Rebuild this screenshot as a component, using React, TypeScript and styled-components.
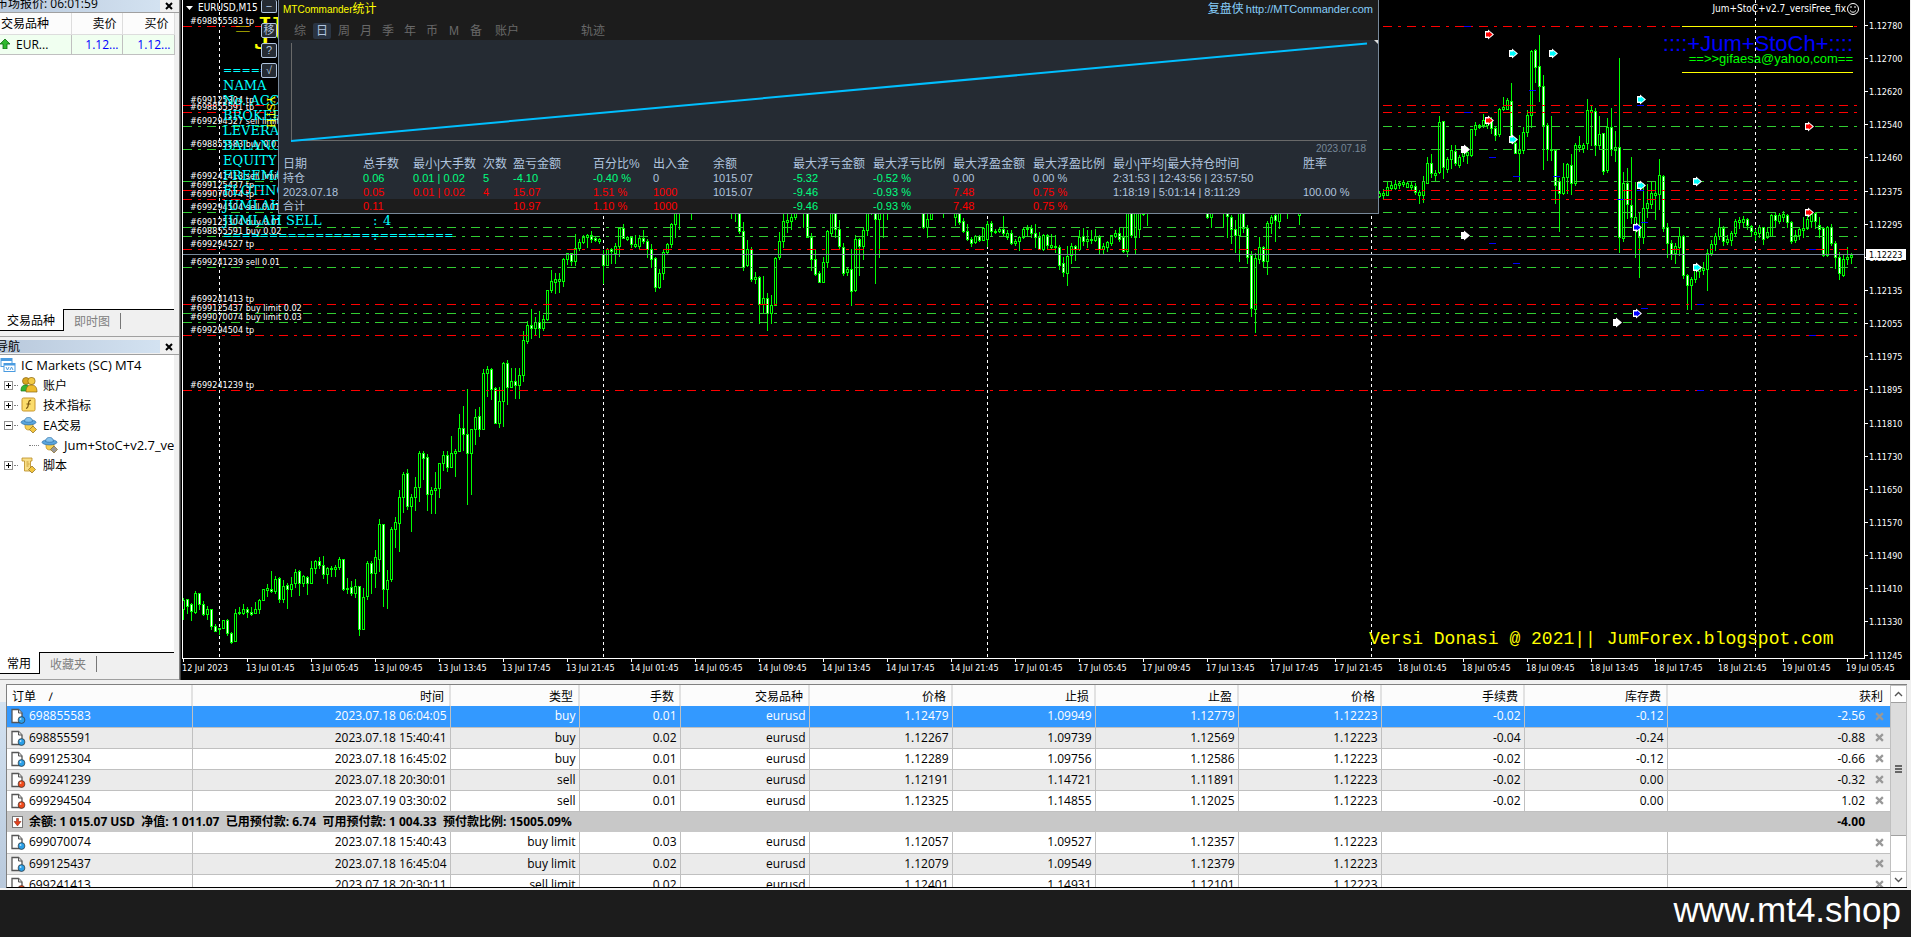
import { FC, ReactNode } from 'react'
import styled, { createGlobalStyle, css } from 'styled-components'

const UiFont = `'Open Sans', 'Noto Sans CJK SC', sans-serif`
const ChartFont = `'DejaVu Sans Condensed', 'Noto Sans', 'Noto Sans CJK SC', sans-serif`
const PanelFont = `'Liberation Sans', 'Noto Sans CJK SC', sans-serif`

const Color = {
  Face: '#f0f0f0',
  Line: '#a0a0a0',
  Cell: '#c0c0c0',
  Green: '#00ff00',
  OrderGreen: '#32cd32',
  Red: '#ff0000',
  Slate: '#778899',
  Steel: '#b0c4de',
  Up: '#00ff7f',
  Down: '#ff0000',
}

/* ---------- chart data ---------- */

// index of the first bar, then "high top bottom low" per bar, w = falling bar
const barRuns: [number, string][] = [
  [
    0,
    `598 600 609 619,599 599 606 613w,603 604 611 620w,591 593 612 613,593 593 604 609w,601 604 614 615w,
    606 609 614 619,609 609 626 629w,624 626 631 631w,628 628 629 634w,620 620 628 628,619 620 633 635w,
    632 633 642 643w,609 613 641 641,607 612 613 614,604 609 613 614,607 609 612 617w,607 612 614 615w,
    602 609 613 613,599 600 609 613,589 589 600 600,584 588 590 596,571 589 591 592w,576 579 591 593,
    577 578 599 602w,580 586 599 602,583 585 589 608w,577 584 589 596,569 572 583 587,570 571 583 595w,
    575 576 583 586,576 577 583 594w,561 568 583 583,560 561 568 573,557 561 565 568w,556 565 574 578w,
    567 568 574 583,566 568 569 576,565 567 569 576,557 559 567 569,559 559 589 590w,578 588 589 593,
    581 587 593 595w,579 586 593 597,586 586 629 635w,588 597 629 629,561 563 596 599,561 563 573 593w,
    550 557 573 587,519 524 559 571,524 524 589 606w,570 580 589 608,527 529 579 581,517 522 529 547,
    490 497 523 551,472 474 497 512,469 473 506 509w,494 497 506 531,477 487 497 510,451 453 487 501,
    451 453 458 479w,454 457 494 510w,487 490 494 513,472 488 490 513,463 463 488 497,451 455 463 470,
    451 455 467 471w,436 453 467 467,449 451 453 476,414 428 451 451,406 428 434 450w,389 434 453 504w,
    429 429 453 494,409 417 429 444,407 416 429 436w,369 373 429 429,366 369 373 396,368 369 389 399w,
    387 388 423 423w,387 401 423 427,362 363 401 426,360 363 387 404w,368 381 387 387,368 381 385 398w,
    368 375 385 398,331 340 375 381,321 325 341 343,309 325 328 338w,317 322 328 335,311 322 328 337w,
    315 319 328 330,290 290 319 320,270 281 290 292,273 279 282 293,273 279 281 292,258 259 281 286,
    253 253 259 264,253 253 261 265w,234 248 261 265,239 242 248 250,235 237 242 243,234 235 237 247,
    231 235 239 242w,236 238 240 241w,238 239 241 243,250 254 265 283w,248 249 265 265,248 249 251 263w,
    243 246 253 263,227 228 246 256,224 228 238 238w,236 237 239 240,236 237 244 247w,235 244 246 247,
    235 238 246 249,230 238 241 243w,239 241 249 257w,244 249 259 267w,257 258 287 291w,269 273 287 288,
    249 252 273 279,243 244 252 254,223 224 244 247,206 213 224 237,200 205 210 229`,
  ],
  [127, `200 203 208 219`],
  [
    137,
    `200 203 208 218,200 203 208 221,200 207 231 233w,222 231 267 270w,240 249 265 266,247 249 279 281w,
    272 277 279 283,276 277 304 323w,276 298 304 312,293 298 313 330w,295 305 313 323,257 258 305 305,
    232 241 257 259,210 221 241 247,205 220 222 232,213 217 221 229,208 213 217 219`,
  ],
  [
    155,
    `200 203 210 227,200 207 237 237w,233 237 259 270w,250 259 274 275w,271 273 282 282w,257 262 282 282,
    230 231 262 267,205 207 233 235,203 207 229 237w,220 229 246 248w,243 247 273 275w,267 269 272 275,
    249 269 291 305w,235 239 290 291,238 239 246 275w,227 230 246 259,200 210 230 235,200 205 212 214,
    200 207 219 283w,200 207 219 257,200 204 208 237,200 204 208 219`,
  ],
  [185, `200 207 227 228w,214 219 227 237,203 207 219 219`],
  [190, `200 204 208 217`],
  [
    193,
    `200 207 217 225,205 210 222 224w,218 221 231 232w,224 231 239 240w,237 239 243 246w,235 236 242 243,
    235 236 240 241w,227 228 240 240,221 224 239 246,221 223 231 236w,229 231 232 233,227 229 231 232,
    216 229 233 236w,230 233 237 239,230 233 243 244w,239 241 243 245,236 237 241 250,227 229 237 238,
    225 228 229 235,225 228 233 237w,224 233 237 247w,232 237 249 249w,234 235 249 250,234 235 245 249w,
    234 245 247 249,235 246 247 252,245 247 265 269w,257 263 272 276w,246 256 273 285,243 246 255 263,
    245 246 249 260w,230 237 249 250,228 236 241 245w,230 239 241 247,230 239 240 243,229 236 240 241,
    235 237 249 254w,243 246 249 254,241 242 247 251,235 235 243 245,230 233 236 237,227 233 239 241w,
    227 237 251 252w,200 207 251 256,200 207 235 237w,203 207 237 254,200 207 229 237,205 208 214 215,
    200 205 208 225`,
  ],
  [256, `203 207 217 218w,203 207 217 227`],
  [
    260,
    `200 204 208 227,203 207 216 237w,215 217 229 243w,220 229 235 252w,203 207 235 261,203 207 228 232w,
    225 228 257 263w,251 255 308 316w,253 258 309 332,237 247 259 263,246 247 261 267w,221 223 261 274,
    215 217 223 233,203 215 220 241w,203 207 221 228`,
  ],
  [276, `200 204 208 218`],
  [279, `203 210 215 224`],
  [
    299,
    `191 193 196 197,189 193 195 198,182 187 195 195,182 185 188 189,180 184 188 189,182 183 185 188,
    180 182 184 186,181 183 187 187,182 185 187 190,183 186 192 194w,190 192 195 203,176 181 195 202,
    157 163 183 183,154 163 173 177w,170 173 175 180,116 122 172 173,121 121 167 178w,157 159 169 172,
    145 150 159 168,145 151 163 165w,155 157 165 167,147 151 156 161,147 152 155 163,129 129 155 156,
    122 125 129 135,124 125 127 128,114 120 125 127,117 120 125 128,117 120 128 133w,127 128 135 140w,
    108 109 134 136,97 107 109 110,98 100 109 109,83 101 140 143w,139 143 153 153w,135 150 153 181,
    127 132 150 153,110 115 132 136,50 51 115 127,49 50 67 82w,35 66 86 101w,75 86 125 169w,
    123 125 149 160w,116 149 150 160,149 150 185 203w,178 181 193 231w,163 177 193 194,163 164 177 193,
    154 165 183 194w,143 145 183 185,136 145 147 151,143 145 148 152,99 110 143 149,105 110 112 145,
    108 111 145 155w,116 134 145 149,133 133 171 174w,118 127 170 172,108 127 149 155w,131 147 150 161,
    58 147 237 252w,172 183 238 241,168 183 204 218w,157 205 217 223w,182 217 227 257,212 227 237 277w,
    183 208 237 243,184 203 208 217,182 193 204 208,181 193 195 219,159 175 194 209,175 176 228 231w,
    223 227 243 257w,240 243 254 259w,243 246 253 263,228 236 247 255,235 236 275 278w,274 275 285 309w,
    277 279 285 309,264 269 279 282,266 268 271 277,262 268 270 274,249 253 269 290,240 244 253 255,
    233 236 244 250,218 227 236 239,226 228 241 245w,235 239 242 244,231 233 240 245,219 221 233 235,
    217 220 222 228,216 219 222 226,218 219 225 229w,225 226 231 235w,229 232 234 240,225 227 233 237,
    227 227 239 244w,228 232 237 238,214 215 236 236,212 215 220 226w,213 215 221 223,211 214 217 221,
    214 215 222 227w,221 222 241 243w,230 235 240 242,227 229 235 239,217 228 230 237,215 219 228 229,
    211 214 221 227,212 213 221 228w,217 225 229 237w,227 228 255 256w,226 227 255 256,224 227 243 245w,
    241 243 257 268w,252 257 273 279w,255 259 275 276,247 257 259 264,253 255 257 263`,
  ],
]

const bars = barRuns.flatMap(([start, text]) =>
  text.split(',').map((item, i) => {
    const raw = item.trim()
    const [high, top, bottom, low] = raw.replace('w', '').split(' ').map(Number)
    return { x: 183 + (start + i) * 4, high, top, bottom, low, falling: raw.endsWith('w') }
  }),
)

const orderLines: { y: number; tp?: boolean; label?: string }[] = [
  { y: 26, tp: true, label: '#698855583 tp' },
  { y: 105, tp: true, label: '#699125304 tp' },
  { y: 112, tp: true, label: '#698855591 tp' },
  { y: 126, label: '#699294527 sell limit 0.02' },
  { y: 149, label: '#698855583 buy 0.01' },
  { y: 181, label: '#699241413 sell limit 0.02' },
  { y: 190, tp: true, label: '#699125437 tp' },
  { y: 199, tp: true, label: '#699070074 tp' },
  { y: 212, label: '#699294504 sell 0.01' },
  { y: 227, label: '#699125304 buy 0.01' },
  { y: 236, label: '#698855591 buy 0.02' },
  { y: 249, tp: true, label: '#699294527 tp' },
  { y: 267, label: '#699241239 sell 0.01' },
  { y: 304, tp: true, label: '#699241413 tp' },
  { y: 313, label: '#699125437 buy limit 0.02' },
  { y: 322, label: '#699070074 buy limit 0.03' },
  { y: 335, tp: true, label: '#699294504 tp' },
  { y: 390, tp: true, label: '#699241239 tp' },
]

const prices: [string, number][] = [
  ['1.12780', 25],
  ['1.12700', 58],
  ['1.12620', 91],
  ['1.12540', 124],
  ['1.12460', 157],
  ['1.12375', 191],
  ['1.12295', 224],
  ['1.12215', 257],
  ['1.12135', 290],
  ['1.12055', 323],
  ['1.11975', 356],
  ['1.11895', 389],
  ['1.11810', 423],
  ['1.11730', 456],
  ['1.11650', 489],
  ['1.11570', 522],
  ['1.11490', 555],
  ['1.11410', 588],
  ['1.11330', 621],
  ['1.11245', 655],
]

const hours = ['01:45', '05:45', '09:45', '13:45', '17:45', '21:45']
const times = [
  '12 Jul 2023',
  ...['13', '14', '17', '18', '19']
    .flatMap((day) => hours.map((hour) => `${day} Jul ${hour}`))
    .slice(0, 26),
]

const arrows: [number, number, string][] = [
  [1489, 34, '#ff0000'],
  [1513, 53, '#00ffff'],
  [1553, 53, '#00ffff'],
  [1489, 120, '#ff0000'],
  [1513, 139, '#00ffff'],
  [1465, 149, '#ffffff'],
  [1641, 99, '#00ffff'],
  [1809, 126, '#ff0000'],
  [1641, 185, '#00ffff'],
  [1697, 181, '#00ffff'],
  [1809, 212, '#ff0000'],
  [1637, 227, '#0000ff'],
  [1465, 235, '#ffffff'],
  [1697, 267, '#00ffff'],
  [1637, 313, '#0000ff'],
  [1617, 322, '#ffffff'],
]

const stops = [
  [1467, 26],
  [1467, 112],
  [1532, 90],
  [1640, 105],
  [1492, 157],
  [1516, 176],
  [1556, 176],
  [1640, 190],
  [1620, 199],
  [1644, 222],
  [1492, 243],
  [1516, 263],
  [1812, 249],
  [1700, 304],
  [1644, 308],
  [1812, 335],
  [1700, 390],
]

const infoRows = [
  'NAMA',
  'No. ACC',
  'BROKER',
  'LEVERAGE',
  'BALANCE',
  'EQUITY',
  'FREEMARGIN',
  'FLOTING',
  'JUMLAH BUY',
  'JUMLAH SELL',
]

/* ---------- table data ---------- */

const statHeads: [string, number?][] = [
  ['日期', 80],
  ['总手数', 50],
  ['最小|大手数', 70],
  ['次数', 30],
  ['盈亏金额', 80],
  ['百分比%', 60],
  ['出入金', 60],
  ['余额', 80],
  ['最大浮亏金额', 80],
  ['最大浮亏比例', 80],
  ['最大浮盈金额', 80],
  ['最大浮盈比例', 80],
  ['最小|平均|最大持仓时间', 190],
  ['胜率'],
]

type Tone = 'up' | 'down' | 'plain'
const toneKeys: Record<string, Tone> = { u: 'up', d: 'down', p: 'plain' }

const statRows = [
  {
    cells: ['持仓', '0.06', '0.01 | 0.02', '5', '-4.10', '-0.40 %', '0', '1015.07', '-5.32', '-0.52 %', '0.00', '0.00 %', '2:31:53 | 12:43:56 | 23:57:50', ''],
    tones: 'puuuuuppuupppp',
  },
  {
    cells: ['2023.07.18', '0.05', '0.01 | 0.02', '4', '15.07', '1.51 %', '1000', '1015.07', '-9.46', '-0.93 %', '7.48', '0.75 %', '1:18:19 | 5:01:14 | 8:11:29', '100.00 %'],
    tones: 'pddddddpuuddpp',
  },
  {
    cells: ['合计', '0.11', '', '', '10.97', '1.10 %', '1000', '', '-9.46', '-0.93 %', '7.48', '0.75 %', '', ''],
    tones: 'pddddddpuuddpp',
  },
]

const orderHeads: [string, number?][] = [
  ['订单', 185],
  ['时间', 258],
  ['类型', 129],
  ['手数', 101],
  ['交易品种', 129],
  ['价格', 143],
  ['止损', 143],
  ['止盈', 143],
  ['价格', 143],
  ['手续费', 143],
  ['库存费', 143],
  ['获利'],
]

const openOrders = [
  ['698855583', '2023.07.18 06:04:05', 'buy', '0.01', 'eurusd', '1.12479', '1.09949', '1.12779', '1.12223', '-0.02', '-0.12', '-2.56'],
  ['698855591', '2023.07.18 15:40:41', 'buy', '0.02', 'eurusd', '1.12267', '1.09739', '1.12569', '1.12223', '-0.04', '-0.24', '-0.88'],
  ['699125304', '2023.07.18 16:45:02', 'buy', '0.01', 'eurusd', '1.12289', '1.09756', '1.12586', '1.12223', '-0.02', '-0.12', '-0.66'],
  ['699241239', '2023.07.18 20:30:01', 'sell', '0.01', 'eurusd', '1.12191', '1.14721', '1.11891', '1.12223', '-0.02', '0.00', '-0.32'],
  ['699294504', '2023.07.19 03:30:02', 'sell', '0.01', 'eurusd', '1.12325', '1.14855', '1.12025', '1.12223', '-0.02', '0.00', '1.02'],
]

const pendingOrders = [
  ['699070074', '2023.07.18 15:40:43', 'buy limit', '0.03', 'eurusd', '1.12057', '1.09527', '1.12357', '1.12223', '', '', ''],
  ['699125437', '2023.07.18 16:45:04', 'buy limit', '0.02', 'eurusd', '1.12079', '1.09549', '1.12379', '1.12223', '', '', ''],
  ['699241413', '2023.07.18 20:30:11', 'sell limit', '0.02', 'eurusd', '1.12401', '1.14931', '1.12101', '1.12223', '', '', ''],
]

/* ---------- icons ---------- */

const UpArrowIcon = () => (
  <svg width="10" height="10" viewBox="0 0 10 10">
    <path d="M5 0L10 5H7V10H3V5H0Z" fill="#2eb82e" stroke="#0a6b0a" strokeWidth="0.8" />
  </svg>
)

const CloseIcon: FC<{ size?: number }> = ({ size = 8 }) => (
  <svg width={size} height={size} viewBox="0 0 8 8">
    <path d="M1 1L7 7M7 1L1 7" stroke="currentColor" strokeWidth="2" />
  </svg>
)

const TerminalIcon = () => (
  <svg width="16" height="16" viewBox="0 0 16 16">
    <rect x="1" y="1.5" width="11" height="8" fill="#fff" stroke="#4a9be0" />
    <path d="M1 3h11" stroke="#4a9be0" strokeWidth="2" />
    <rect x="4" y="6.5" width="11" height="8" fill="#fff" stroke="#4a9be0" />
    <path d="M4 7.5h11" stroke="#4a9be0" strokeWidth="2" />
    <path d="M6 10l1.5 3 1.5-3M10 13l1.5-3 1.5 3" fill="none" stroke="#4a9be0" />
  </svg>
)

const AccountsIcon = () => (
  <svg width="18" height="18" viewBox="0 0 18 18">
    <circle cx="6" cy="5" r="3.5" fill="#d9a520" stroke="#8a6410" strokeWidth="0.7" />
    <path d="M1 15c0-5 2-6 5-6s4 2 4 6z" fill="#35b535" stroke="#157515" strokeWidth="0.7" />
    <rect x="8" y="1.5" width="7" height="7" rx="3" fill="#f3cb45" stroke="#8a6410" strokeWidth="0.7" />
    <path d="M6 16c0-5 2-7 5.5-7s5.5 2 5.5 7z" fill="#eebc2c" stroke="#8a6410" strokeWidth="0.7" />
  </svg>
)

const IndicatorIcon = () => (
  <svg width="18" height="18" viewBox="0 0 18 18">
    <rect x="2" y="2" width="13" height="13" rx="1.5" fill="#fbdc6c" stroke="#c9962a" />
    <path d="M11 4.5c-2-.5-2.300 1-2.600 3.500S8 12.500 6 12.300M6.500 8h4" fill="none" stroke="#7a5510" strokeWidth="1.2" />
  </svg>
)

const ExpertIcon: FC<{ tag: string }> = ({ tag }) => (
  <svg width="18" height="18" viewBox="0 0 18 18">
    <path d="M5 6h8v4c0 3-1.500 4-4 4s-4-1-4-4z" fill="#f6cf55" stroke="#b98a1e" strokeWidth="0.7" />
    <ellipse cx="8.5" cy="6.3" rx="7.5" ry="2.6" fill="#5aa5dd" stroke="#2c6ea8" strokeWidth="0.7" />
    <path d="M4.500 5.500C5 2 6.500 1.500 8.500 1.500s3.500.5 4 4c-2 1-6 1-8 0z" fill="#86c3ee" stroke="#2c6ea8" strokeWidth="0.7" />
    <path d="M13 10l3.500 3.500L13 17l-3.500-3.500z" fill={tag} stroke="#8a6a20" strokeWidth="0.7" />
  </svg>
)

const ScriptIcon = () => (
  <svg width="18" height="18" viewBox="0 0 18 18">
    <path d="M2 2h10v3h-1.500v7H13v3H4.500V5H2z" fill="#f8de87" stroke="#b98a1e" strokeWidth="0.8" />
    <path d="M6.500 6h2M6.500 8h3M6.500 10h2" stroke="#b98a1e" strokeWidth="0.8" />
    <path d="M12 10l3.500 3.500L12 17l-3.500-3.500z" fill="#f3c53d" stroke="#8a6a20" strokeWidth="0.7" />
  </svg>
)

const OrderIcon: FC<{ color: string }> = ({ color }) => (
  <svg width="16" height="16" viewBox="0 0 16 16">
    <path d="M2 1.500h6.500l3.500 3.500v9.500h-10z" fill="#fff" stroke="#555" strokeWidth="1.3" />
    <path d="M8.500 1.500v3.500h3.500" fill="#ddd" stroke="#555" />
    <circle cx="11.5" cy="12" r="3.4" fill={color} stroke="#333" strokeWidth="0.7" />
    <circle cx="10.6" cy="11" r="0.9" fill="#fff" opacity="0.7" />
  </svg>
)

const BalanceIcon = () => (
  <svg width="16" height="16" viewBox="0 0 16 16">
    <rect x="2.5" y="2.5" width="10" height="11" fill="#fff" stroke="#777" />
    <path d="M6.500 4.500h2v3h2.500L7.500 12 4 7.500h2.500z" fill="#e2401c" stroke="#7a1a08" strokeWidth="0.5" />
  </svg>
)

const ChevronIcon: FC<{ down?: boolean }> = ({ down }) => (
  <svg width="9" height="6" viewBox="0 0 9 6">
    <path d={down ? 'M1 1l3.500 3.500L8 1' : 'M1 5l3.500-3.500L8 5'} fill="none" stroke="#555" strokeWidth="1.4" />
  </svg>
)

/* ---------- parts ---------- */

const GlobalStyle = createGlobalStyle`
  * { box-sizing: border-box; }
  body { margin: 0; background: #1c1c1c; }
  button { margin: 0; padding: 0; border: 0; background: none; font: inherit; color: inherit; }
  table { border-collapse: collapse; border-spacing: 0; table-layout: fixed; }
  th, td { padding: 0; font-weight: inherit; text-align: left; white-space: nowrap; }
  svg { display: block; }
`

const Page = styled.div`
  display: flex;
  flex-direction: column;
  min-height: 100vh;
  overflow: hidden;
  font-family: ${UiFont};
  font-size: 12px;
  color: #000;
  background: #1c1c1c;
`

const Workspace = styled.div`
  display: flex;
  background: ${Color.Face};
`

const Sidebar = styled.aside`
  display: flex;
  flex-direction: column;
  flex: 0 0 179px;
  width: 179px;
  overflow: hidden;
`

const DockPanel = styled.section<{ grow?: boolean }>`
  display: flex;
  flex-direction: column;
  flex: ${(props) => (props.grow ? '1' : '0 0 337px')};
  border-bottom: 1px solid ${Color.Line};
  padding-bottom: 5px;
`

const DockTitle = styled.header<{ clipped?: boolean }>`
  display: flex;
  flex: 0 0 ${(props) => (props.clipped ? 13 : 16)}px;
  align-items: center;
  padding-right: 1px;
  margin-top: ${(props) => (props.clipped ? 0 : 2)}px;
  border-bottom: 1px solid ${Color.Line};
  overflow: hidden;

  h2 {
    flex: 1;
    margin: 0;
    font-size: 12px;
    font-weight: 400;
    line-height: ${(props) => (props.clipped ? 8 : 13)}px;
    height: 13px;
    text-indent: -4px;
    background: linear-gradient(90deg, #b9c9dc, #d3e2f1);
  }

  button {
    width: 18px;
    height: 12px;
    display: grid;
    place-items: center;
  }
`

const White = styled.div`
  flex: 1;
  margin-right: 5px;
  background: #fff;
`

const QuoteTable = styled.table`
  width: 174px;

  th,
  td {
    padding: 0 3px;
    border-right: 1px solid ${Color.Cell};
    border-bottom: 1px solid ${Color.Cell};
    text-align: right;
  }
  th {
    padding: 0 5px;
    height: 21px;
    border-color: #ddd;
    background: #fcfcfc;
  }
  th:first-child {
    text-align: left;
    padding-left: 1px;
  }
  td {
    height: 20px;
    background: #f0fff0;
    color: #0000ff;
  }
  td:first-child {
    color: #000;
  }
`

const Symbol = styled.span`
  display: flex;
  align-items: center;
  gap: 6px;
  margin-left: -3px;
`

const Tabs = styled.nav`
  display: flex;
  flex: 0 0 22px;
  height: 22px;
  margin-right: 5px;
`

const Tab = styled.button<{ active?: boolean }>`
  padding: 0 8px 0 7px;
  ${(props) =>
    props.active
      ? css`
          background: #fff;
          border-right: 1px solid #000;
          border-bottom: 1px solid #000;
        `
      : css`
          padding-left: 10px;
          color: #808080;
          border-top: 1px solid #000;
        `}
`

const TabRest = styled.span`
  flex: 1;
  border-top: 1px solid #000;

  &::before {
    content: '';
    display: block;
    width: 1px;
    height: 16px;
    margin: 3px 0 0 2px;
    background: #777;
  }
`

const Tree = styled.ul`
  margin: 0;
  padding: 0;
  list-style: none;
`

const TreeItem = styled.li<{ depth: number; wide?: boolean }>`
  display: flex;
  align-items: center;
  gap: 5px;
  height: 20px;
  padding-left: ${(props) => [0, 4, 29][props.depth]}px;
  font-size: ${(props) => (props.wide ? 13 : 12)}px;
  white-space: nowrap;
  overflow: hidden;

  svg {
    flex: none;
  }
`

const Expander = styled.button`
  width: 9px;
  height: 9px;
  border: 1px solid #919191;
  background: #fff;
  display: grid;
  place-items: center;
`

const Dots = styled.span<{ wide?: boolean }>`
  flex: none;
  width: ${(props) => (props.wide ? 10 : 4)}px;
  margin-left: ${(props) => (props.wide ? 0 : -4)}px;
  border-top: 1px dotted #808080;
  margin-right: -3px;
`

const ChartWindow = styled.main`
  position: relative;
  flex: 1;
  min-width: 0;
  overflow: hidden;
  background: #000;
  border-left: 1px solid #808080;
  box-shadow: inset 1px 0 #404040;
  margin-right: 1px;

  > svg {
    margin-left: 1px;
  }
`

const ToolButtons = styled.div`
  position: absolute;
  top: 0;
  left: 81px;
  display: flex;
  flex-direction: column;
  gap: 5px;
`

const ToolButton = styled.button<{ clipped?: boolean }>`
  width: 16px;
  height: ${(props) => (props.clipped ? 13 : 15)}px;
  margin-bottom: ${(props) => (props.clipped ? 5 : 0)}px;
  border: 1px solid ${Color.Steel};
  border-top-width: ${(props) => (props.clipped ? 0 : 1)}px;
  border-radius: 2px;
  background: #252b33;
  color: ${Color.Steel};
  font: 11px ${PanelFont};
  line-height: 11px;
`

const StatPanel = styled.section`
  position: absolute;
  top: 0;
  left: 98px;
  width: 1101px;
  border: 1px solid ${Color.Slate};
  border-top: 0;
  background: #252b33;
  color: ${Color.Steel};
  font-family: ${PanelFont};
  font-size: 12px;
`

const StatHead = styled.header`
  display: flex;
  justify-content: space-between;
  height: 20px;
  padding: 0 5px 0 4px;
  background: #1c1c1c;
  line-height: 19px;

  h1 {
    margin: 0;
    font-size: 12px;
    font-weight: 400;
    color: #ffff00;
  }
  h1 span {
    font-size: 10px;
  }
  a {
    display: flex;
    gap: 2px;
    color: #87cefa;
    text-decoration: none;
  }
  a span {
    font-size: 11px;
  }
`

const StatTabs = styled.nav`
  display: flex;
  align-items: flex-end;
  gap: 4px;
  height: 20px;
  padding: 0 12px 1px;
  background: #1c1c1c;
  color: #696969;
`

const StatTab = styled.button<{ active?: boolean; gap?: number }>`
  min-width: 18px;
  height: 16px;
  line-height: 16px;
  margin-left: ${(props) => props.gap || 0}px;
  border-radius: 2px;
  ${(props) => props.active && `background: #2a3442; color: ${Color.Steel};`}
`

const Curve = styled.figure`
  display: flex;
  flex-direction: column;
  height: 117px;
  margin: 0;
  padding-left: 11px;

  figcaption {
    padding-right: 12px;
    font-size: 10px;
    line-height: 13px;
    text-align: right;
    color: ${Color.Slate};
  }
`

const StatTable = styled.table`
  width: 100%;

  th,
  td {
    height: 14px;
    line-height: 14px;
  }
  td {
    font-size: 11px;
  }
  th:first-child,
  td:first-child {
    padding-left: 4px;
  }
  tbody tr:last-child {
    background: #1c1c1c;
  }
`

const StatCell = styled.td<{ tone: Tone }>`
  color: ${(props) =>
    ({ up: Color.Up, down: Color.Down, plain: Color.Steel })[props.tone]};
`

const Terminal = styled.section`
  display: flex;
  height: 210px;
  padding-top: 4px;
  background: ${Color.Face};
  border-bottom: 2px solid #f4f4f4;
`

const TerminalGrip = styled.div`
  flex: 0 0 6px;
  margin-top: 18px;
  background: linear-gradient(#d3e2f1, #b9c9dc);
`

const TerminalBody = styled.div`
  display: flex;
  flex: 1;
  min-width: 0;
  border-top: 1px solid #808080;
  border-left: 1px solid #808080;
  border-bottom: 1px solid #000;
  margin-right: 4px;
  overflow: hidden;
`

const OrderArea = styled.div`
  flex: 1;
  min-width: 0;
  overflow: hidden;
`

const OrderTable = styled.table`
  width: 100%;

  th {
    height: 21px;
    padding: 0 5px;
    text-align: right;
    white-space: pre;
    background: #fcfcfc;
    border-right: 2px solid #e2e2e2;
  }
  th:first-child {
    text-align: left;
  }
  th:last-child {
    border-right: 0;
    padding-right: 7px;
  }
`

const OrderRow = styled.tr<{ selected?: boolean; odd?: boolean }>`
  background: ${(props) => (props.selected ? '#3399ff' : props.odd ? '#ebebeb' : '#fff')};
  color: ${(props) => (props.selected ? '#fff' : '#000')};

  td {
    height: 21px;
    line-height: 20px;
    padding: 0 3px;
    text-align: right;
    border-right: 1px solid ${Color.Cell};
    border-bottom: 1px solid ${Color.Cell};
  }
  td:last-child {
    border-right: 0;
    padding-right: 6px;
  }
`

const SummaryRow = styled.tr`
  background: #c8c8c8;
  font-weight: 700;

  td {
    height: 21px;
    line-height: 20px;
    padding: 0 3px;
  }
  td:last-child {
    text-align: right;
    padding-right: 25px;
  }
`

const WithIcon = styled.span`
  display: flex;
  align-items: center;
  gap: 3px;
  white-space: pre;
`

const Profit = styled.span`
  display: flex;
  justify-content: flex-end;
  align-items: center;
  gap: 9px;

  button {
    width: 10px;
    display: grid;
    place-items: center;
    color: #999;
  }
`

const ScrollBar = styled.div`
  display: flex;
  flex-direction: column;
  flex: 0 0 17px;
  background: #fff;
  border: 1px solid ${Color.Cell};
  border-width: 1px 1px 0;

  button {
    height: 16px;
    display: grid;
    place-items: center;
  }
  button:last-child {
    margin-top: auto;
    border-top: 1px solid ${Color.Cell};
  }
`

const Thumb = styled.div`
  height: 134px;
  display: grid;
  align-content: center;
  justify-content: center;
  gap: 1px;
  background: #dcdcdc;
  border: 1px solid ${Color.Line};
  border-width: 1px 0;

  i {
    width: 7px;
    height: 2px;
    background: #666;
  }
`

const Footer = styled.footer`
  flex: 1;
  padding: 0 10px 0 0;
  text-align: right;
  font: 35px/40px ${PanelFont};
  color: #fff;
`

/* ---------- views ---------- */

const DockTabs: FC<{ items: string[] }> = ({ items }) => (
  <Tabs>
    {items.map((item, i) => (
      <Tab key={item} active={i === 0}>
        {item}
      </Tab>
    ))}
    <TabRest />
  </Tabs>
)

const TreeNode: FC<{ icon: ReactNode; open?: boolean; children: ReactNode }> = ({
  icon,
  open,
  children,
}) => (
  <TreeItem depth={1}>
    <Expander aria-label="expand">
      <svg width="5" height="5" viewBox="0 0 5 5" shapeRendering="crispEdges">
        <path d={open ? 'M0 2h5v1H0z' : 'M0 2h5v1H0zM2 0h1v5H2z'} />
      </svg>
    </Expander>
    <Dots />
    {icon}
    {children}
  </TreeItem>
)

const Chart = () => (
  <svg width="1729" height="680" viewBox="181 0 1729 680" fontFamily={ChartFont} fontSize="9">
    <rect x="181" y="0" width="1729" height="680" fill="#000" />
    <g shapeRendering="crispEdges">
      {[219, 603, 987, 1371, 1755].map((x) => (
        <path key={x} d={`M${x + 0.5} 0V658`} stroke="#fff" strokeDasharray="3 3" />
      ))}
      {bars.map((bar) => (
        <g key={bar.x}>
          <rect x={bar.x} y={bar.high} width="1" height={bar.low - bar.high + 1} fill={Color.Green} />
          <rect x={bar.x - 1} y={bar.top} width="3" height={bar.bottom - bar.top + 1} fill={Color.Green} />
          {bar.bottom - bar.top > 1 && (
            <rect
              x={bar.x}
              y={bar.top + 1}
              width="1"
              height={bar.bottom - bar.top - 1}
              fill={bar.falling ? '#fff' : '#000'}
            />
          )}
        </g>
      ))}
      {orderLines.map((line) => (
        <path
          key={line.y}
          d={`M183 ${line.y + 0.5}H1858`}
          stroke={line.tp ? Color.Red : Color.OrderGreen}
          strokeDasharray="9 6 3 6"
        />
      ))}
      <path d="M183 254.5H1864" stroke={Color.Slate} />
      {stops.map(([x, y]) => (
        <path key={`${x}-${y}`} d={`M${x - 3} ${y + 0.5}h7`} stroke="#0000ff" />
      ))}
      <path d="M182.5 0V658.5M182 658.5H1865M1864.5 0V659" stroke="#fff" fill="none" />
      {times.map((time, i) => (
        <path key={time} d={`M${183.5 + i * 64} 659v3`} stroke="#fff" />
      ))}
      {prices.map(([price, y]) => (
        <path key={price} d={`M1865 ${y + 0.5}h3`} stroke="#fff" />
      ))}
    </g>
    {arrows.map(([x, y, color]) => (
      <g key={`${x}-${y}`} transform={`translate(${x} ${y})`}>
        <path d="M-4-3H-1V-4.500L5 .5-1 5.500V4H-4Z" fill="#fff" />
        <path d="M-3-1.500H0V-2.500L3.500 .5 0 3.500V2.500H-3Z" fill={color} />
      </g>
    ))}
    <g fill="#fff">
      {orderLines.map((line) => (
        <text key={line.y} x="190" y={line.y - 2}>
          {line.label}
        </text>
      ))}
      {times.map((time, i) => (
        <text key={time} x={182 + i * 64} y="671">
          {time}
        </text>
      ))}
      {prices.map(([price, y]) => (
        <text key={price} x="1869" y={y + 4}>
          {price}
        </text>
      ))}
      <path d="M186 6h7l-3.500 4z" />
      <text x="198" y="11" fontSize="10">
        EURUSD,M15
      </text>
      <text x="1846" y="12" fontSize="10" textAnchor="end">
        Jum+StoC+v2.7_versiFree_fix
      </text>
    </g>
    <g fill="none" stroke="#fff">
      <circle cx="1853" cy="9" r="5.5" />
      <path d="M1850 10.500q3 3.500 6 0M1851 6v2M1855 6v2" />
    </g>
    <rect x="1866" y="249" width="40" height="11" fill="#fff" />
    <text x="1869" y="258" fill="#000">
      1.12223
    </text>

    <g fontFamily="'DejaVu Serif', serif" fontSize="13" fill="#00ffff">
      <text x="223" y="74" fontSize="11">
        =====
      </text>
      {infoRows.map((row, i) => (
        <text key={row} x="223" y={90 + i * 15}>
          {row}
        </text>
      ))}
      <text x="373" y="225">
        :
      </text>
      <text x="383" y="225">
        4
      </text>
      <text x="223" y="239" fontSize="11">
        =========================
      </text>
      <text x="373" y="240">
        :
      </text>
    </g>
    <g fill="#ffff00">
      <text x="233" y="41" fontFamily="Lato, sans-serif" fontWeight="100" fontSize="34">
        =
      </text>
      <text x="258" y="42" fontFamily="'DejaVu Serif', serif" fontSize="34">
        JU
      </text>
      <text fontFamily="'DejaVu Serif', serif" fontSize="11" transform="translate(267 96) rotate(90)">
        YSTH
      </text>
      <path d="M1682 26.5H1853M1682 72.5H1853" stroke="#ffff00" shapeRendering="crispEdges" />
      <text x="1369" y="644" fontFamily="'Liberation Mono', monospace" fontSize="18">
        Versi Donasi @ 2021|| JumForex.blogspot.com
      </text>
    </g>
    <g fontFamily="'Liberation Sans', sans-serif" textAnchor="end">
      <text x="1853" y="51" fontSize="22" fill="#0000ff">
        ::::+Jum+StoCh+::::
      </text>
      <text x="1853" y="63" fontSize="13" fill="#00ff00">
        {'==>>gifaesa@yahoo,com=='}
      </text>
    </g>
  </svg>
)

const Statistics = () => (
  <StatPanel>
    <StatHead>
      <h1>
        <span>MTCommander</span>统计
      </h1>
      <a href="#site">
        复盘侠<span>http://MTCommander.com</span>
      </a>
    </StatHead>
    <StatTabs>
      {['综', '日', '周', '月', '季', '年', '币', 'M', '备', '账户', '轨迹'].map((name) => (
        <StatTab key={name} active={name === '日'} gap={{ 账户: 6, 轨迹: 58 }[name]}>
          {name}
        </StatTab>
      ))}
    </StatTabs>
    <Curve>
      <svg width="1088" height="102" viewBox="290 40 1088 102">
        <path d="M291.5 43V140.5H1367" fill="none" stroke="#696969" shapeRendering="crispEdges" />
        <path d="M291 141L1367 43.5" stroke="#00bfff" strokeWidth="2" />
        <path d="M1378 36v8l-4-4z" fill="#ddd" />
      </svg>
      <figcaption>2023.07.18</figcaption>
    </Curve>
    <StatTable>
      <colgroup>
        {statHeads.map(([name, width], i) => (
          <col key={name} width={i === 0 ? 84 : width} />
        ))}
      </colgroup>
      <thead>
        <tr>
          {statHeads.map(([name]) => (
            <th key={name}>{name}</th>
          ))}
        </tr>
      </thead>
      <tbody>
        {statRows.map((row) => (
          <tr key={row.cells[0]}>
            {row.cells.map((cell, i) => (
              <StatCell key={i} tone={toneKeys[row.tones[i]]}>
                {cell}
              </StatCell>
            ))}
          </tr>
        ))}
      </tbody>
    </StatTable>
  </StatPanel>
)

const Order: FC<{ cells: string[]; selected?: boolean; odd?: boolean }> = ({
  cells,
  selected,
  odd,
}) => {
  const [ticket, ...rest] = cells
  const profit = rest.pop()
  const pending = profit === ''
  return (
    <OrderRow selected={selected} odd={odd}>
      <td>
        <WithIcon>
          <OrderIcon color={cells[2].startsWith('buy') ? '#2a9fe8' : '#f04a1a'} />
          {ticket}
        </WithIcon>
      </td>
      {(pending ? rest.slice(0, 8) : rest).map((cell, i) => (
        <td key={i}>{cell}</td>
      ))}
      {pending && <td colSpan={2} />}
      <td>
        <Profit>
          {profit}
          <button aria-label="close order">
            <CloseIcon size={9} />
          </button>
        </Profit>
      </td>
    </OrderRow>
  )
}

const App = () => (
  <Page>
    <GlobalStyle />
    <Workspace>
      <Sidebar>
        <DockPanel>
          <DockTitle clipped>
            <h2>市场报价: 06:01:59</h2>
            <button aria-label="close">
              <CloseIcon />
            </button>
          </DockTitle>
          <White>
            <QuoteTable>
              <colgroup>
                <col width="71" />
                <col width="51" />
                <col width="52" />
              </colgroup>
              <thead>
                <tr>
                  <th>交易品种</th>
                  <th>卖价</th>
                  <th>买价</th>
                </tr>
              </thead>
              <tbody>
                <tr>
                  <td>
                    <Symbol>
                      <UpArrowIcon />
                      EUR...
                    </Symbol>
                  </td>
                  <td>1.12...</td>
                  <td>1.12...</td>
                </tr>
              </tbody>
            </QuoteTable>
          </White>
          <DockTabs items={['交易品种', '即时图']} />
        </DockPanel>
        <DockPanel grow>
          <DockTitle>
            <h2>导航</h2>
            <button aria-label="close">
              <CloseIcon />
            </button>
          </DockTitle>
          <White>
            <Tree>
              <TreeItem depth={0} wide>
                <TerminalIcon />
                IC Markets (SC) MT4
              </TreeItem>
              <TreeNode icon={<AccountsIcon />}>账户</TreeNode>
              <TreeNode icon={<IndicatorIcon />}>技术指标</TreeNode>
              <TreeNode icon={<ExpertIcon tag="#f3c53d" />} open>
                EA交易
              </TreeNode>
              <TreeItem depth={2} wide>
                <Dots wide />
                <ExpertIcon tag="#999" />
                Jum+StoC+v2.7_ve
              </TreeItem>
              <TreeNode icon={<ScriptIcon />}>脚本</TreeNode>
            </Tree>
          </White>
          <DockTabs items={['常用', '收藏夹']} />
        </DockPanel>
      </Sidebar>
      <ChartWindow>
        <Chart />
        <ToolButtons>
          <ToolButton clipped>−</ToolButton>
          <ToolButton>移</ToolButton>
          <ToolButton>?</ToolButton>
          <ToolButton>√</ToolButton>
        </ToolButtons>
        <Statistics />
      </ChartWindow>
    </Workspace>
    <Terminal>
      <TerminalGrip />
      <TerminalBody>
        <OrderArea>
          <OrderTable>
            <colgroup>
              {orderHeads.map(([, width], i) => (
                <col key={i} width={width} />
              ))}
            </colgroup>
            <thead>
              <tr>
                {orderHeads.map(([name], i) => (
                  <th key={i}>{i === 0 ? `${name}    ∕` : name}</th>
                ))}
              </tr>
            </thead>
            <tbody>
              {openOrders.map((cells, i) => (
                <Order key={cells[0]} cells={cells} selected={i === 0} odd={i % 2 === 1} />
              ))}
              <SummaryRow>
                <td colSpan={11}>
                  <WithIcon>
                    <BalanceIcon />
                    {'余额: 1 015.07 USD  净值: 1 011.07  已用预付款: 6.74  可用预付款: 1 004.33  预付款比例: 15005.09%'}
                  </WithIcon>
                </td>
                <td>-4.00</td>
              </SummaryRow>
              {pendingOrders.map((cells, i) => (
                <Order key={cells[0]} cells={cells} odd={i % 2 === 1} />
              ))}
            </tbody>
          </OrderTable>
        </OrderArea>
        <ScrollBar>
          <button aria-label="scroll up">
            <ChevronIcon />
          </button>
          <Thumb>
            <i />
            <i />
            <i />
          </Thumb>
          <button aria-label="scroll down">
            <ChevronIcon down />
          </button>
        </ScrollBar>
      </TerminalBody>
    </Terminal>
    <Footer>www.mt4.shop</Footer>
  </Page>
)

export default App
